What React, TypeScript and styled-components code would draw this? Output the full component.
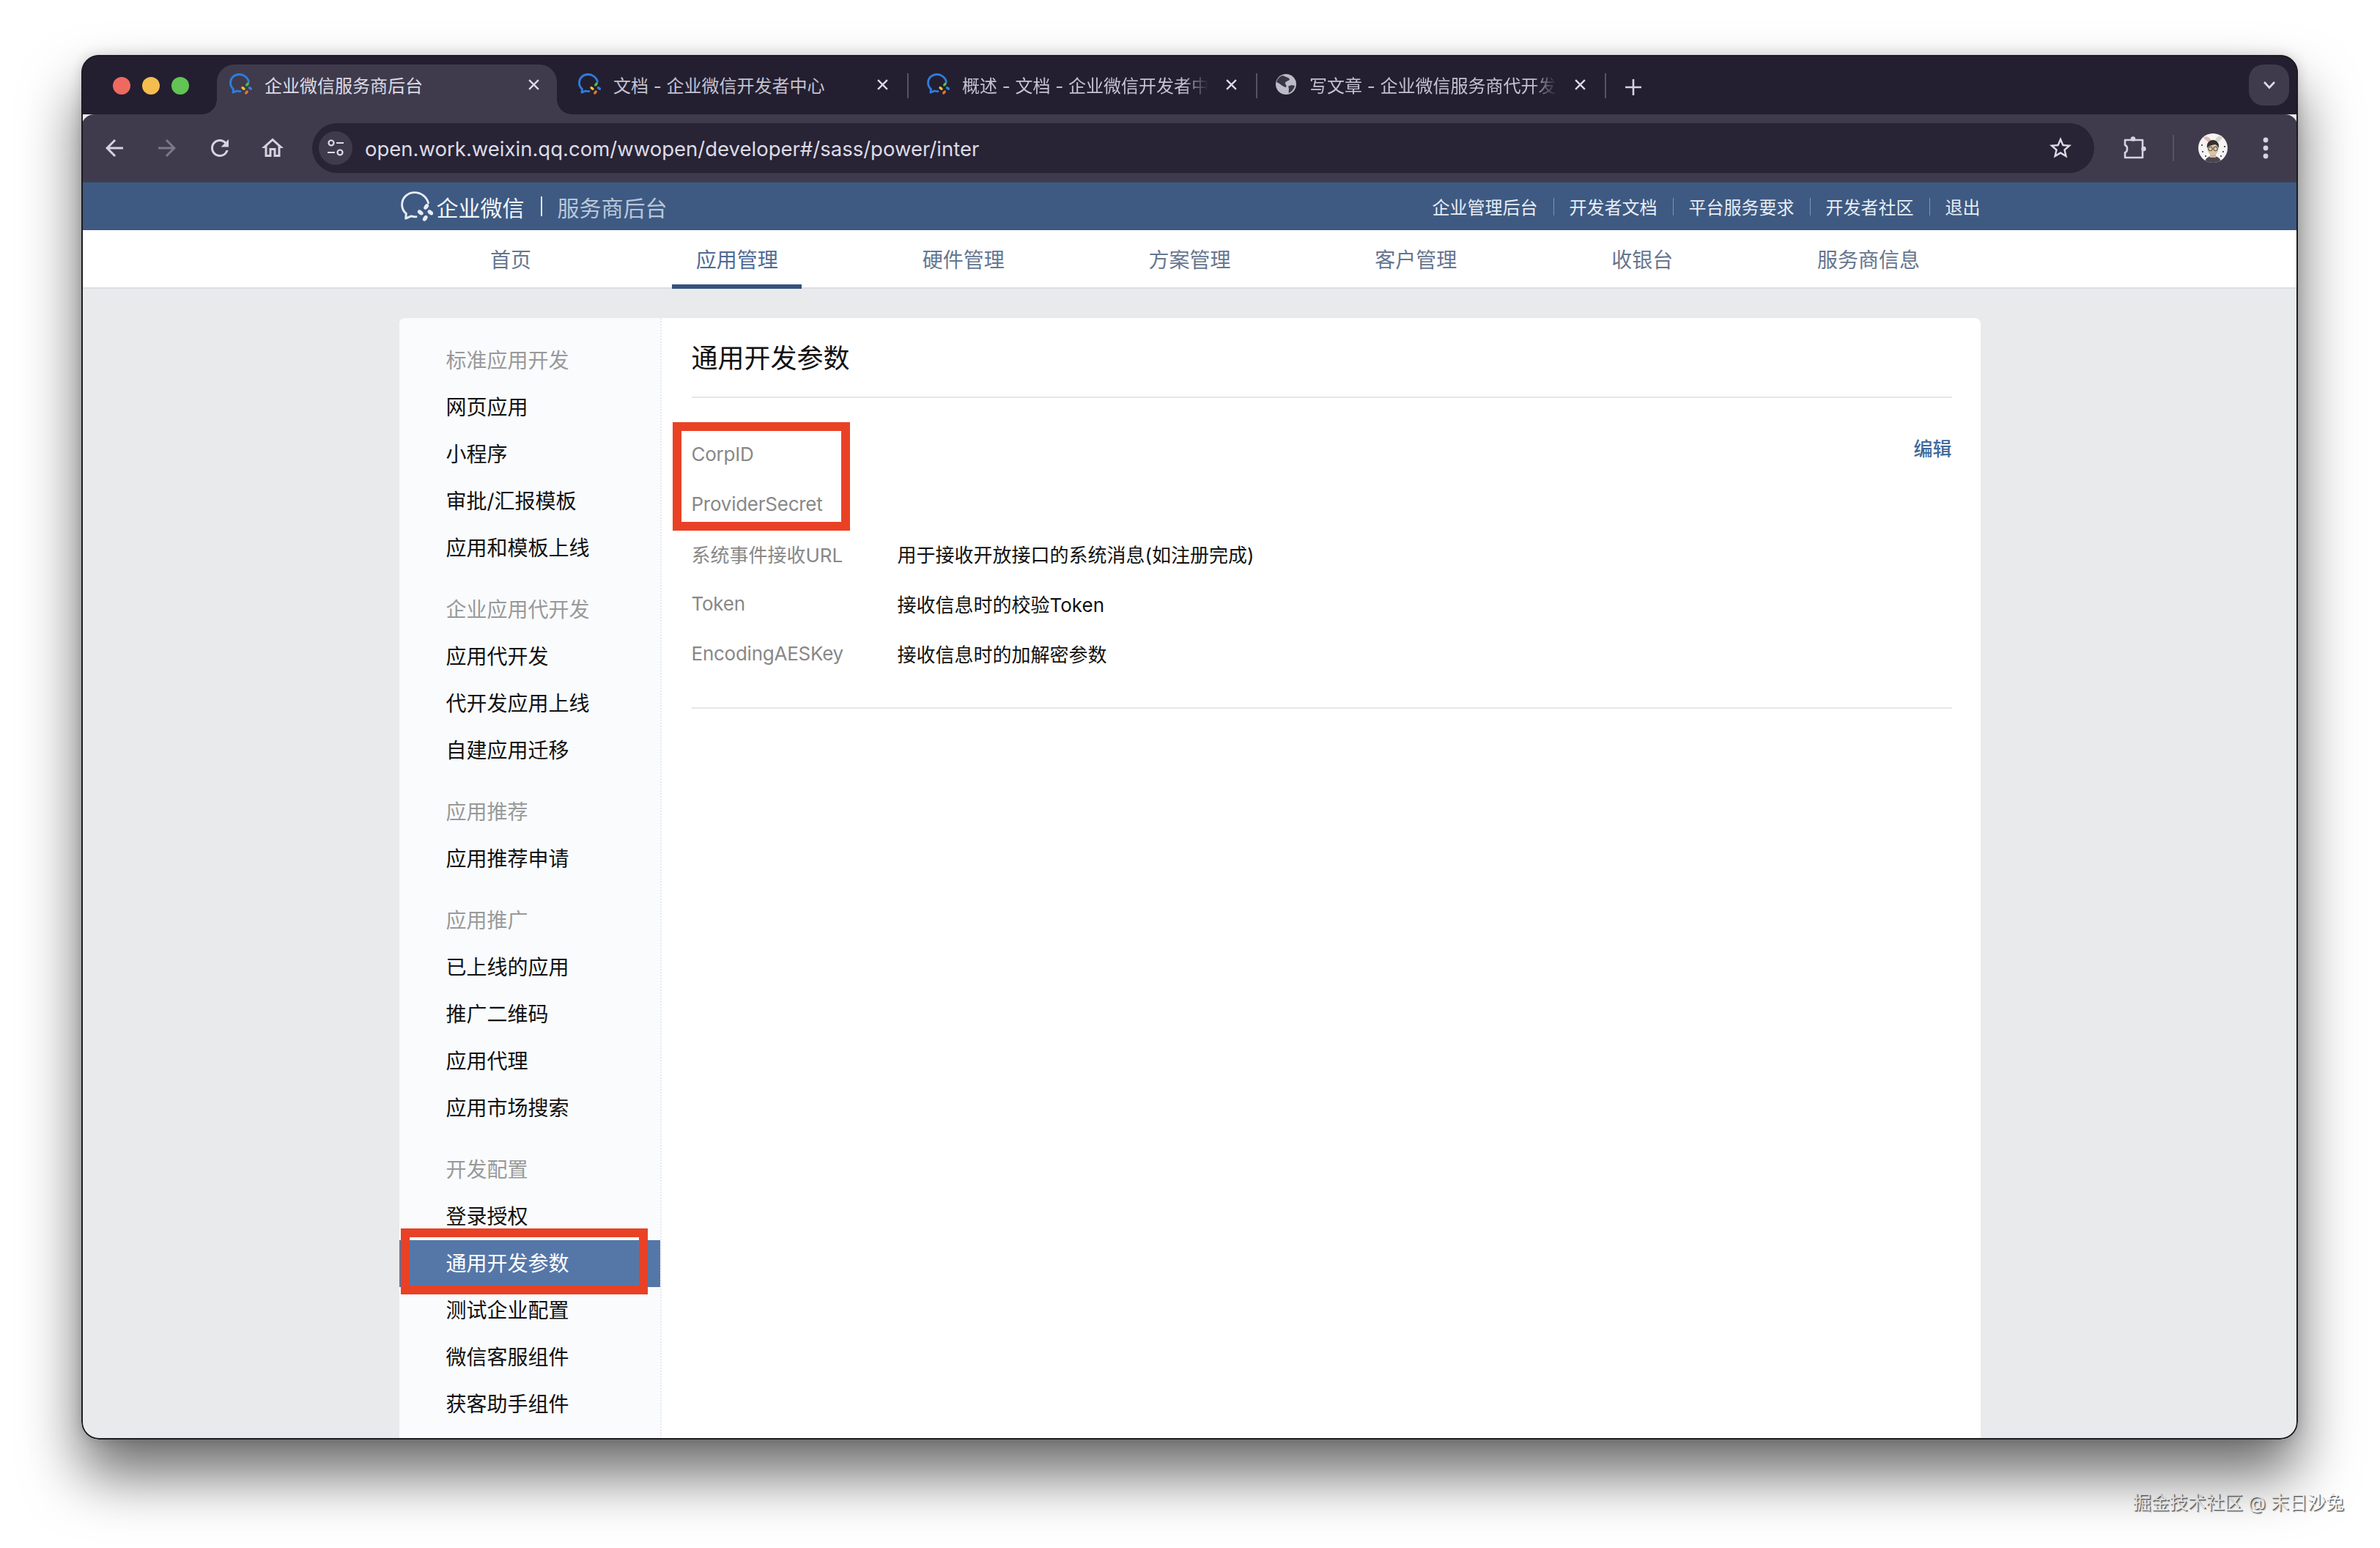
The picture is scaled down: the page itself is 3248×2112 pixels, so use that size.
import React from 'react';
import styled, { createGlobalStyle } from 'styled-components';

const GlobalStyle = createGlobalStyle`
  html, body {
    margin: 0;
    padding: 0;
    background: #fff;
  }

  body {
    font-family: Inter, 'Noto Sans CJK SC', sans-serif;
  }
`;

const Page = styled.div`
  width: 3248px;
  height: 2112px;
  padding: 75px 0 0 111px;
  box-sizing: border-box;
  overflow: hidden;
`;

const Window = styled.div`
  position: relative;
  width: 3025px;
  height: 1889px;
  border-radius: 24px;
  overflow: hidden;
  display: flex;
  flex-direction: column;
  background: #e9eaec;
  box-shadow: 0 48px 80px rgba(0, 0, 0, 0.58), 0 0 18px rgba(0, 0, 0, 0.16);

  &::after {
    content: '';
    position: absolute;
    inset: 0;
    border: 2px solid #1c1b20;
    border-radius: 24px;
    pointer-events: none;
  }
`;

const Watermark = styled.div`
  width: 3088px;
  margin-top: 68px;
  text-align: right;
  font-size: 25px;
  line-height: 36px;
  color: #fafafa;
  text-shadow: 1px 1px 0 #5c5c5c, 2px 2px 1px #bbb;
`;

/* tab strip */
const TabStrip = styled.div`
  flex: none;
  height: 81px;
  display: flex;
  align-items: flex-end;
  background: #231f31;
`;

const Lights = styled.div`
  display: flex;
  gap: 16px;
  align-self: flex-start;
  margin: 30px 30px 0 43px;
`;

const Light = styled.span<{ $color: string }>`
  width: 24px;
  height: 24px;
  border-radius: 50%;
  background: ${({ $color }) => $color};
`;

const Tab = styled.div<{ $active?: boolean; $divider?: boolean }>`
  position: relative;
  width: 476px;
  height: 68px;
  box-sizing: border-box;
  padding: 0 22px 14px 24px;
  display: flex;
  align-items: center;
  gap: 17px;
  color: ${({ $active }) => ($active ? '#dddbe6' : '#c4c2cf')};
  font-size: 24px;

  ${({ $active }) =>
    $active &&
    `
    &::before {
      content: '';
      position: absolute;
      inset: 0 4px 0 8px;
      background: #3f3b4d;
      border-radius: 24px 24px 0 0;
    }
  `}

  ${({ $divider }) =>
    $divider &&
    `
    &::after {
      content: '';
      position: absolute;
      right: 0;
      top: 12px;
      width: 2px;
      height: 34px;
      background: #57535f;
    }
  `}

  > * {
    position: relative;
  }
`;

const Flare = styled.span<{ $side: 'left' | 'right' }>`
  position: absolute !important;
  bottom: 0;
  width: 20px;
  height: 20px;
  ${({ $side }) => ($side === 'left' ? 'left: -12px;' : 'right: -16px;')}
  background: radial-gradient(
    circle at ${({ $side }) => ($side === 'left' ? '0 0' : '100% 0')},
    transparent 19.5px,
    #3f3b4d 20px
  );
`;

const TabTitle = styled.span<{ $fade?: boolean }>`
  flex: 1;
  min-width: 0;
  white-space: nowrap;
  ${({ $fade }) =>
    $fade &&
    `
    overflow: hidden;
    -webkit-mask-image: linear-gradient(90deg, #000 90%, transparent 100%);
    mask-image: linear-gradient(90deg, #000 90%, transparent 100%);
  `}
`;

const TabClose = styled.span`
  flex: none;
  width: 28px;
  display: flex;
  justify-content: center;
  color: #dddbe6;
`;

const NewTab = styled.span`
  margin: 0 0 26px 26px;
  display: flex;
  color: #d5d3df;
`;

const StripMenu = styled.div`
  margin: 13px 12px 0 auto;
  align-self: flex-start;
  width: 55px;
  height: 56px;
  border-radius: 20px;
  background: #3f3b4d;
  display: flex;
  align-items: center;
  justify-content: center;
  color: #dddbe6;
`;

/* toolbar */
const Toolbar = styled.div`
  position: relative;
  flex: none;
  height: 93px;
  box-sizing: border-box;
  padding: 12px 8px 12px 9px;
  display: flex;
  align-items: center;
  background: #3f3b4d;
  border-radius: 18px 18px 0 0;
  border-bottom: 1px solid #37465c;
`;

const ToolButton = styled.span<{ $dim?: boolean }>`
  flex: none;
  width: 72px;
  display: flex;
  justify-content: center;
  align-items: center;
  color: ${({ $dim }) => ($dim ? '#7c7987' : '#d5d3df')};
`;

const AddressBar = styled.div`
  flex: 1;
  height: 68px;
  margin: 0 18px;
  padding: 0 28px 0 9px;
  display: flex;
  align-items: center;
  background: #282435;
  border-radius: 34px;
`;

const SiteChip = styled.span`
  flex: none;
  width: 46px;
  height: 46px;
  border-radius: 50%;
  background: #3f3b4d;
  display: flex;
  align-items: center;
  justify-content: center;
  color: #dddbe6;
`;

const Url = styled.span`
  flex: 1;
  margin-left: 17px;
  color: #dddbe6;
  font-size: 27.5px;
  line-height: 68px;
  padding-top: 2px;
  white-space: nowrap;
`;

const StarIcon = styled.span`
  flex: none;
  display: flex;
  color: #dddbe6;
`;

const ToolDivider = styled.span`
  flex: none;
  width: 2px;
  height: 36px;
  margin: 0 17px;
  background: #565260;
`;

/* site header */
const SiteHeader = styled.header`
  flex: none;
  height: 65px;
  background: #3e5a82;
`;

const Container = styled.div`
  width: 2158px;
  margin: 0 auto;
`;

const HeaderInner = styled(Container)`
  height: 100%;
  display: flex;
  align-items: center;
  justify-content: space-between;
`;

const Brand = styled.div`
  display: flex;
  align-items: center;
  color: #f2f5f9;
  font-size: 30px;
`;

const BrandName = styled.span`
  margin-left: 5px;
`;

const BrandDivider = styled.span`
  width: 2px;
  height: 27px;
  margin: 0 21px 0 22px;
  background: #dbe3ee;
`;

const BrandSub = styled.span`
  color: #b9c6d9;
`;

const TopLinks = styled.nav`
  display: flex;
  align-items: center;
  color: #e8edf4;
  font-size: 24px;
`;

const TopDivider = styled.span`
  width: 1px;
  height: 24px;
  margin: 0 21px;
  background: #7d93b3;
`;

/* main nav */
const MainNav = styled.nav`
  flex: none;
  height: 80px;
  box-sizing: border-box;
  background: #fff;
  border-bottom: 2px solid #dcdee1;
`;

const NavGrid = styled.div`
  width: 2162px;
  height: 78px;
  margin: 0 auto;
  display: grid;
  grid-template-columns: repeat(7, 1fr);
`;

const NavItem = styled.a<{ $active?: boolean }>`
  position: relative;
  display: flex;
  align-items: center;
  justify-content: center;
  font-size: 28px;
  color: #66768f;

  ${({ $active }) =>
    $active &&
    `
    color: #4f6b93;

    &::after {
      content: '';
      position: absolute;
      left: 66px;
      right: 66px;
      bottom: -2px;
      height: 6px;
      background: #36527c;
    }
  `}
`;

/* card */
const Card = styled(Container)`
  flex: 1;
  min-height: 0;
  margin-top: 40px;
  display: flex;
  background: #fff;
  border-radius: 8px 8px 0 0;
  overflow: hidden;
`;

const Sidebar = styled.aside`
  flex: none;
  width: 358px;
  box-sizing: border-box;
  padding-top: 26px;
  background: #f9fbfd;
  border-right: 2px dotted #e8eaed;
`;

const SideGroup = styled.div`
  margin-bottom: 20px;
`;

const SideTitle = styled.div`
  height: 64px;
  padding-left: 64px;
  line-height: 64px;
  font-size: 28px;
  color: #999;
`;

const SideItem = styled.a<{ $active?: boolean }>`
  position: relative;
  display: block;
  height: 64px;
  padding-left: 64px;
  line-height: 64px;
  font-size: 28px;
  color: ${({ $active }) => ($active ? '#fff' : '#111')};
  background: ${({ $active }) => ($active ? '#5577a8' : 'transparent')};
`;

const RedFrame = styled.span<{ $variant: 'side' | 'main' }>`
  position: absolute;
  box-sizing: border-box;
  border: 12px solid #e94125;
  pointer-events: none;
  ${({ $variant }) =>
    $variant === 'side'
      ? 'top: -16px; bottom: -10px; left: 2px; right: 17px;'
      : 'top: -9px; bottom: -3px; left: -26px; width: 242px;'}
`;

const Main = styled.main`
  flex: 1;
  min-width: 0;
  padding: 0 39px 0 41px;
`;

const MainTitle = styled.h2`
  margin: 0;
  height: 109px;
  box-sizing: border-box;
  border-bottom: 2px solid #e4e6e9;
  line-height: 111px;
  font-size: 36px;
  font-weight: 400;
  color: #111;
`;

const Params = styled.section`
  margin-top: 42px;
  padding-bottom: 40px;
  border-bottom: 2px solid #e4e6e9;
  display: flex;
  justify-content: space-between;
  align-items: flex-start;
`;

const Highlighted = styled.div`
  position: relative;
`;

const ParamRow = styled.div`
  height: 68px;
  display: flex;
  align-items: center;
  font-size: 26px;
`;

const ParamLabel = styled.span<{ $latin?: boolean }>`
  flex: none;
  width: 281px;
  color: #888;
  letter-spacing: ${({ $latin }) => ($latin ? '-0.25px' : '0')};
`;

const ParamValue = styled.span`
  color: #111;
`;

const EditLink = styled.a`
  line-height: 56px;
  font-size: 26px;
  font-weight: 500;
  color: #3f6a9b;
`;

/* icons */
const WeComIcon = ({ size, mono }: { size: number; mono?: boolean }) => {
  const petal = (color: string) => (mono ? '#e8edf4' : color);
  return (
    <svg width={size} height={size} viewBox="0 0 32 32" fill="none">
      <path
        d="M27.5 12.5C26 6.5 20.5 2.5 14.5 2.5 7.8 2.5 2.5 7.6 2.5 14c0 3.4 1.5 6.4 4 8.5L6 27.2l5.2-2.2c1.5.5 3 .7 4.8.6"
        stroke={petal('#2f7de1')}
        strokeWidth={mono ? 2 : 2.8}
        strokeLinecap="round"
        strokeLinejoin="round"
      />
      <ellipse cx="25.5" cy="16" rx="1.9" ry="3" transform="rotate(35 25.5 16)" fill={petal('#55b949')} />
      <ellipse cx="29.5" cy="21.5" rx="1.9" ry="3" transform="rotate(125 29.5 21.5)" fill={petal('#2f7de1')} />
      <ellipse cx="24.5" cy="27" rx="1.9" ry="3" transform="rotate(35 24.5 27)" fill={petal('#e0762a')} />
      <ellipse cx="20" cy="21.5" rx="1.9" ry="3" transform="rotate(125 20 21.5)" fill={petal('#f2c230')} />
    </svg>
  );
};

const GlobeIcon = () => (
  <svg width="30" height="30" viewBox="0 0 30 30">
    <circle cx="15" cy="15" r="14" fill="#bdbbc7" />
    <path d="M11 3c3 2 7 2 9 5-1 3-5 2-6 5-1 2 3 3 1 6-3 0-6-3-9-5-2-1-3-2-4-2 1-4 4-8 9-9zM18 18c3-2 6-2 9-1-1 4-4 8-8 10-1-3 1-6-1-9z" fill="#3a3646" />
  </svg>
);

const MaterialIcon = ({ size, d }: { size: number; d: string }) => (
  <svg width={size} height={size} viewBox="0 0 24 24" fill="currentColor">
    <path d={d} />
  </svg>
);

const CloseIcon = () => (
  <svg width="17" height="17" viewBox="0 0 16 16" stroke="currentColor" strokeWidth="2.2">
    <path d="M2 2l12 12M14 2L2 14" />
  </svg>
);

const PlusIcon = () => (
  <svg width="22" height="22" viewBox="0 0 22 22" stroke="currentColor" strokeWidth="2.6">
    <path d="M11 0v22M0 11h22" />
  </svg>
);

const ChevronIcon = () => (
  <svg width="18" height="12" viewBox="0 0 18 12" fill="none" stroke="currentColor" strokeWidth="2.6">
    <path d="M2 2l7 7.5L16 2" />
  </svg>
);

const TuneIcon = () => (
  <svg width="26" height="26" viewBox="0 0 26 26" fill="none" stroke="currentColor" strokeWidth="2.2">
    <circle cx="7" cy="6" r="3.5" />
    <path d="M14 6h10M2 19h10" />
    <circle cx="19" cy="19" r="3.5" />
  </svg>
);

const KebabIcon = () => (
  <svg width="8" height="30" viewBox="0 0 8 30" fill="currentColor">
    <circle cx="4" cy="4" r="3.4" />
    <circle cx="4" cy="15" r="3.4" />
    <circle cx="4" cy="26" r="3.4" />
  </svg>
);

const ExtensionIcon = () => (
  <svg width="36" height="36" viewBox="0 0 36 36" fill="none">
    <path
      d="M6 7H30V31H6V24C10 23 10 15 6 14z"
      stroke="currentColor"
      strokeWidth="2.6"
      strokeLinejoin="round"
    />
    <circle cx="17" cy="5.5" r="3.2" fill="currentColor" />
    <circle cx="31.5" cy="19" r="3.2" fill="currentColor" />
  </svg>
);

const AvatarIcon = () => (
  <svg width="40" height="40" viewBox="0 0 40 40">
    <defs>
      <clipPath id="avatar-clip">
        <circle cx="20" cy="20" r="20" />
      </clipPath>
    </defs>
    <g clipPath="url(#avatar-clip)">
      <rect width="40" height="40" fill="#f6f4f2" />
      <circle cx="5" cy="16" r="1.1" fill="#333" />
      <circle cx="6" cy="25" r="1.1" fill="#333" />
      <circle cx="34" cy="25" r="1.1" fill="#333" />
      <circle cx="31" cy="31" r="1.1" fill="#333" />
      <circle cx="10" cy="31" r="1.1" fill="#333" />
      <circle cx="36" cy="18" r="1.1" fill="#333" />
      <path d="M7 5c5-2 9 0 11 6l-4 1C11 10 8 8 7 5z" fill="#e3b9b4" />
      <path d="M33 5c-5-3-9 0-10 6l4 1c3-2 5-4 6-7z" fill="#d6d2d0" />
      <path d="M9 40c0-6 5-9 11-9s11 3 11 9z" fill="#4b4650" />
      <path d="M16 27h8v6h-8z" fill="#c9b59c" />
      <ellipse cx="20" cy="21" rx="7.5" ry="9" fill="#d8c3a6" />
      <path d="M12 20c-1-7 3-11 8-11s9 4 8 11c-2-3-3-4-5-5-4 1-8 1-11 5z" fill="#33302f" />
      <circle cx="16.5" cy="21" r="2.8" fill="none" stroke="#333" strokeWidth="0.9" />
      <circle cx="23.5" cy="21" r="2.8" fill="none" stroke="#333" strokeWidth="0.9" />
    </g>
  </svg>
);

const ICONS = {
  back: 'M20 11H7.83l5.59-5.59L12 4l-8 8 8 8 1.41-1.41L7.83 13H20v-2z',
  forward: 'M12 4l-1.41 1.41L16.17 11H4v2h12.17l-5.58 5.59L12 20l8-8z',
  reload:
    'M17.65 6.35A7.958 7.958 0 0 0 12 4c-4.42 0-7.99 3.58-7.99 8s3.57 8 7.99 8c3.73 0 6.84-2.55 7.73-6h-2.08A5.99 5.99 0 0 1 12 18c-3.31 0-6-2.69-6-6s2.69-6 6-6c1.66 0 3.14.69 4.22 1.78L13 11h7V4l-2.35 2.35z',
  home: 'M12 5.69l5 4.5V18h-2v-6H9v6H7v-7.81l5-4.5M12 3L2 12h3v8h6v-6h2v6h6v-8h3L12 3z',
  star: 'M22 9.24l-7.19-.62L12 2 9.19 8.63 2 9.24l5.46 4.73L5.82 21 12 17.27 18.18 21l-1.63-7.03L22 9.24zM12 15.4l-3.76 2.27 1-4.28-3.32-2.88 4.38-.38L12 6.1l1.71 4.04 4.38.38-3.32 2.88 1 4.28L12 15.4z',
};

const TOP_LINKS = ['企业管理后台', '开发者文档', '平台服务要求', '开发者社区', '退出'];
const NAV_ITEMS = ['首页', '应用管理', '硬件管理', '方案管理', '客户管理', '收银台', '服务商信息'];

const SIDE_GROUPS = [
  { title: '标准应用开发', items: ['网页应用', '小程序', '审批/汇报模板', '应用和模板上线'] },
  { title: '企业应用代开发', items: ['应用代开发', '代开发应用上线', '自建应用迁移'] },
  { title: '应用推荐', items: ['应用推荐申请'] },
  { title: '应用推广', items: ['已上线的应用', '推广二维码', '应用代理', '应用市场搜索'] },
  { title: '开发配置', items: ['登录授权', '通用开发参数', '测试企业配置', '微信客服组件', '获客助手组件'] },
];

const App = () => (
  <Page>
    <GlobalStyle />
    <Window>
      <TabStrip>
        <Lights>
          <Light $color="#ee6a5f" />
          <Light $color="#f5bd4f" />
          <Light $color="#61c454" />
        </Lights>
        <Tab $active>
          <Flare $side="left" />
          <Flare $side="right" />
          <WeComIcon size={32} />
          <TabTitle>企业微信服务商后台</TabTitle>
          <TabClose>
            <CloseIcon />
          </TabClose>
        </Tab>
        <Tab $divider>
          <WeComIcon size={32} />
          <TabTitle>文档 - 企业微信开发者中心</TabTitle>
          <TabClose>
            <CloseIcon />
          </TabClose>
        </Tab>
        <Tab $divider>
          <WeComIcon size={32} />
          <TabTitle $fade>概述 - 文档 - 企业微信开发者中心</TabTitle>
          <TabClose>
            <CloseIcon />
          </TabClose>
        </Tab>
        <Tab $divider>
          <GlobeIcon />
          <TabTitle $fade>写文章 - 企业微信服务商代开发</TabTitle>
          <TabClose>
            <CloseIcon />
          </TabClose>
        </Tab>
        <NewTab>
          <PlusIcon />
        </NewTab>
        <StripMenu>
          <ChevronIcon />
        </StripMenu>
      </TabStrip>

      <Toolbar>
        <ToolButton>
          <MaterialIcon size={36} d={ICONS.back} />
        </ToolButton>
        <ToolButton $dim>
          <MaterialIcon size={36} d={ICONS.forward} />
        </ToolButton>
        <ToolButton>
          <MaterialIcon size={36} d={ICONS.reload} />
        </ToolButton>
        <ToolButton>
          <MaterialIcon size={36} d={ICONS.home} />
        </ToolButton>
        <AddressBar>
          <SiteChip>
            <TuneIcon />
          </SiteChip>
          <Url>open.work.weixin.qq.com/wwopen/developer#/sass/power/inter</Url>
          <StarIcon>
            <MaterialIcon size={36} d={ICONS.star} />
          </StarIcon>
        </AddressBar>
        <ToolButton>
          <ExtensionIcon />
        </ToolButton>
        <ToolDivider />
        <ToolButton>
          <AvatarIcon />
        </ToolButton>
        <ToolButton>
          <KebabIcon />
        </ToolButton>
      </Toolbar>

      <SiteHeader>
        <HeaderInner>
          <Brand>
            <WeComIcon size={46} mono />
            <BrandName>企业微信</BrandName>
            <BrandDivider />
            <BrandSub>服务商后台</BrandSub>
          </Brand>
          <TopLinks>
            {TOP_LINKS.map((link, i) => (
              <React.Fragment key={link}>
                {i > 0 && <TopDivider />}
                <span>{link}</span>
              </React.Fragment>
            ))}
          </TopLinks>
        </HeaderInner>
      </SiteHeader>

      <MainNav>
        <NavGrid>
          {NAV_ITEMS.map(item => (
            <NavItem key={item} $active={item === '应用管理'}>
              {item}
            </NavItem>
          ))}
        </NavGrid>
      </MainNav>

      <Card>
        <Sidebar>
          {SIDE_GROUPS.map(group => (
            <SideGroup key={group.title}>
              <SideTitle>{group.title}</SideTitle>
              {group.items.map(item => (
                <SideItem key={item} $active={item === '通用开发参数'}>
                  {item}
                  {item === '通用开发参数' && <RedFrame $variant="side" />}
                </SideItem>
              ))}
            </SideGroup>
          ))}
        </Sidebar>
        <Main>
          <MainTitle>通用开发参数</MainTitle>
          <Params>
            <div>
              <Highlighted>
                <RedFrame $variant="main" />
                <ParamRow>
                  <ParamLabel $latin>CorpID</ParamLabel>
                </ParamRow>
                <ParamRow>
                  <ParamLabel $latin>ProviderSecret</ParamLabel>
                </ParamRow>
              </Highlighted>
              <ParamRow>
                <ParamLabel>系统事件接收URL</ParamLabel>
                <ParamValue>用于接收开放接口的系统消息(如注册完成)</ParamValue>
              </ParamRow>
              <ParamRow>
                <ParamLabel $latin>Token</ParamLabel>
                <ParamValue>接收信息时的校验Token</ParamValue>
              </ParamRow>
              <ParamRow>
                <ParamLabel $latin>EncodingAESKey</ParamLabel>
                <ParamValue>接收信息时的加解密参数</ParamValue>
              </ParamRow>
            </div>
            <EditLink>编辑</EditLink>
          </Params>
        </Main>
      </Card>
    </Window>
    <Watermark>掘金技术社区 @ 末日沙兔</Watermark>
  </Page>
);

export default App;
